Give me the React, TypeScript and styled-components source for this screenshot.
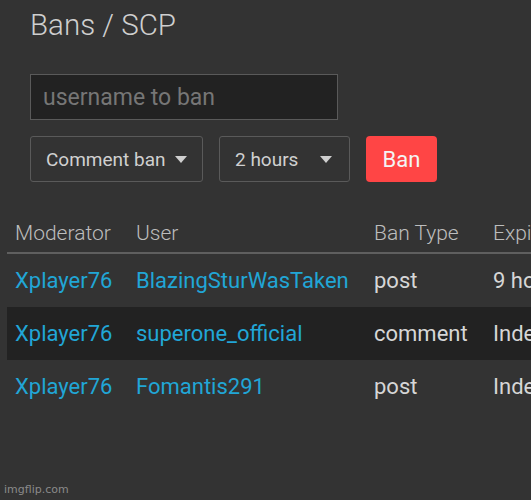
import React from "react";
import styled, { createGlobalStyle } from "styled-components";

const Global = createGlobalStyle`
  html, body { margin: 0; padding: 0; background: #333333; }
  body { width: 531px; height: 500px; overflow: hidden; font-family: Roboto, "Open Sans", sans-serif; }
  * { box-sizing: border-box; }
`;

const Page = styled.div`
  position: relative;
  width: 531px;
  height: 500px;
  overflow: hidden;
  background: #333333;
  padding-top: 8px;
  display: flex;
  flex-direction: column;
`;

const Top = styled.div`
  padding-left: 30px;
  display: flex;
  flex-direction: column;
`;

const Title = styled.h1`
  margin: 0;
  font-size: 29.5px;
  line-height: 34px;
  font-weight: 300;
  color: #cfcfcf;
`;

const Input = styled.input`
  margin-top: 32px;
  width: 308px;
  height: 46px;
  background: #222222;
  border: 1px solid #5a5a5a;
  color: #ddd;
  font-family: Roboto, sans-serif;
  font-size: 23px;
  padding: 0 12px;
  outline: none;
  &::placeholder { color: #767676; }
`;

const Controls = styled.div`
  margin-top: 16px;
  display: flex;
  align-items: center;
`;

const Select = styled.div<{ $w: number; $gap: number }>`
  width: ${(p) => p.$w}px;
  height: 46px;
  margin-right: 16px;
  border: 1px solid #5a5a5a;
  border-radius: 3px;
  background: #333333;
  display: flex;
  align-items: center;
  padding-left: 15px;
  gap: ${(p) => p.$gap}px;
  color: #d0d0d0;
  font-size: 19px;
`;

const Arrow = styled.span`
  width: 0;
  height: 0;
  border-left: 6.5px solid transparent;
  border-right: 6.5px solid transparent;
  border-top: 7px solid #cfcfcf;
`;

const BanButton = styled.button`
  width: 71px;
  height: 46px;
  border: none;
  border-radius: 4px;
  background: #ff4545;
  color: #f4f4f4;
  font-family: Roboto, sans-serif;
  font-size: 22px;
  padding: 0;
`;

const Table = styled.div`
  margin-top: 31px;
  margin-left: 7px;
  width: 524px;
  overflow: hidden;
  display: flex;
  flex-direction: column;
`;

const Cols = `grid-template-columns: 121px 238px 119px 130px;`;

const HeadRow = styled.div`
  display: grid;
  ${Cols}
  height: 41px;
  border-bottom: 2px solid #5f5f5f;
`;

const HeadCell = styled.div`
  padding-left: 8px;
  font-size: 21px;
  font-weight: 300;
  line-height: 40px;
  color: #bdbdbd;
  white-space: nowrap;
`;

const Row = styled.div<{ $dark?: boolean }>`
  display: grid;
  ${Cols}
  height: 53px;
  background: ${(p) => (p.$dark ? "#222222" : "transparent")};
`;

const Cell = styled.div<{ $link?: boolean }>`
  padding-left: 8px;
  font-size: 22px;
  line-height: 53px;
  color: ${(p) => (p.$link ? "#21a6d6" : "#d6d6d6")};
  white-space: nowrap;
  overflow: hidden;
`;

const Watermark = styled.div`
  position: absolute;
  left: 4px;
  bottom: 4px;
  font-family: "DejaVu Sans", sans-serif;
  font-size: 11px;
  color: #8a8a8a;
`;

const rows = [
  { mod: "Xplayer76", user: "BlazingSturWasTaken", type: "post", exp: "9 hours" },
  { mod: "Xplayer76", user: "superone_official", type: "comment", exp: "Indefinite" },
  { mod: "Xplayer76", user: "Fomantis291", type: "post", exp: "Indefinite" },
];

export default function App() {
  return (
    <Page>
      <Global />
      <Top>
        <Title>Bans / SCP</Title>
        <Input placeholder="username to ban" />
        <Controls>
          <Select $w={173} $gap={9}>
            Comment ban <Arrow />
          </Select>
          <Select $w={131} $gap={22}>
            2 hours <Arrow />
          </Select>
          <BanButton>Ban</BanButton>
        </Controls>
      </Top>
      <Table>
        <HeadRow>
          <HeadCell>Moderator</HeadCell>
          <HeadCell>User</HeadCell>
          <HeadCell>Ban Type</HeadCell>
          <HeadCell>Expires</HeadCell>
        </HeadRow>
        {rows.map((r, i) => (
          <Row key={i} $dark={i === 1}>
            <Cell $link>{r.mod}</Cell>
            <Cell $link>{r.user}</Cell>
            <Cell>{r.type}</Cell>
            <Cell>{r.exp}</Cell>
          </Row>
        ))}
      </Table>
      <Watermark>imgflip.com</Watermark>
    </Page>
  );
}
